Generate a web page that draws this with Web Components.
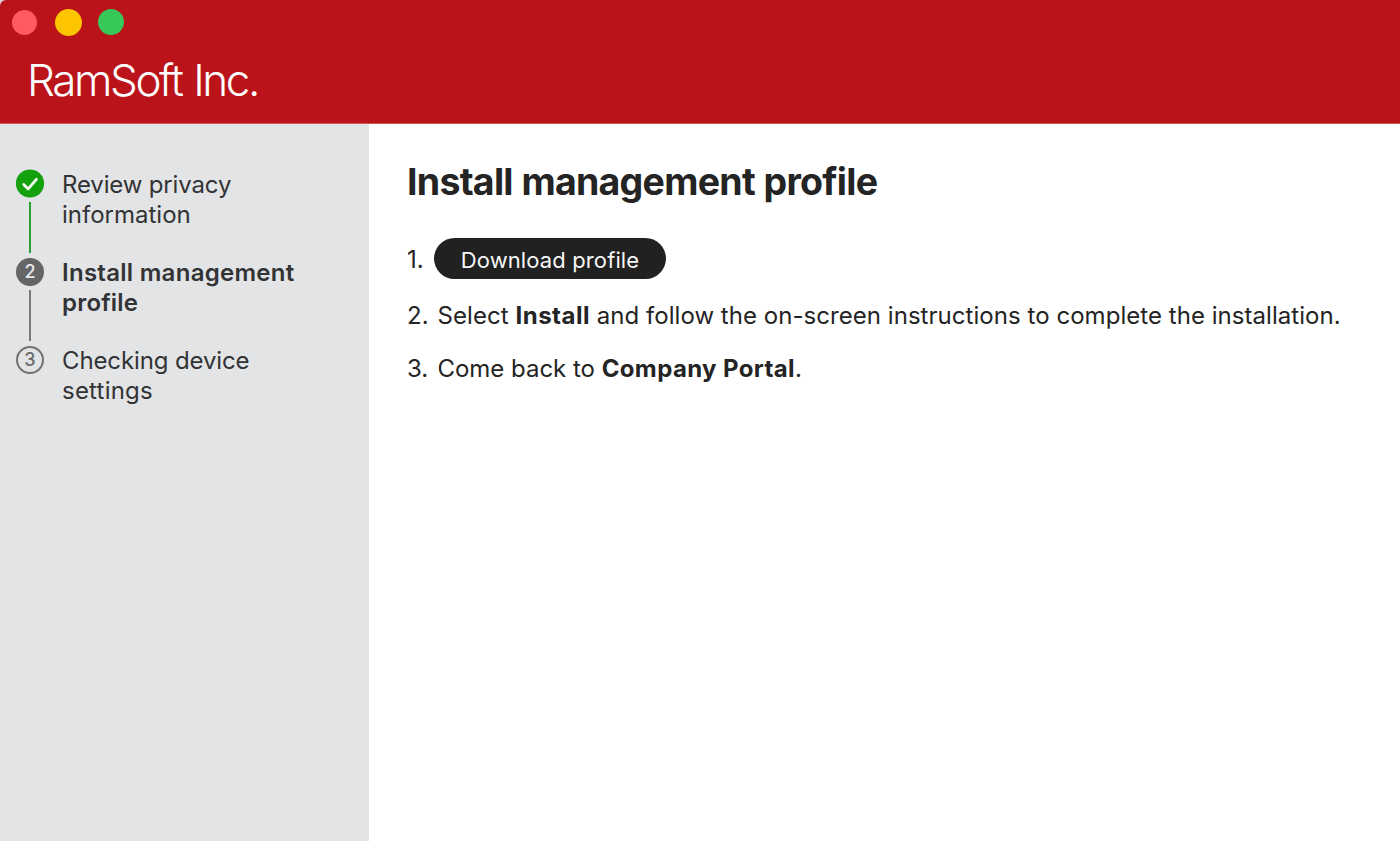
<!DOCTYPE html>
<html lang="en">
<head>
<meta charset="utf-8">
<title>Company Portal</title>
<style>
html, body { margin: 0; height: 100%; overflow: hidden; }
body { font-family: Inter, "Liberation Sans", sans-serif; color: #242424; background: #d9d3d6; }
</style>
</head>
<body>
<portal-window></portal-window>
<script>
const define = (name, html, setup) => customElements.define(name, class extends HTMLElement {
  constructor() {
    super();
    this.attachShadow({ mode: 'open' }).innerHTML = html;
  }
  connectedCallback() { if (setup) setup(this, this.shadowRoot); }
});

define('window-controls', `
<style>
:host { display: flex; align-items: center; height: 28px; padding: 8px 0 0 12px; }
i { width: 26px; height: 26px; border-radius: 50%; flex: none; }
.close { background: #ff5b60; width: 25px; height: 25px; margin-right: 17.5px; }
.min { background: #fdc500; width: 27px; height: 27px; margin-right: 16.5px; }
.max { background: #38c759; }
</style>
<i class="close"></i><i class="min"></i><i class="max"></i>`);

define('title-bar', `
<style>
:host { display: block; box-sizing: border-box; height: 124px; background: #ba141a; border-top-left-radius: 6px; border-bottom: 1px solid #cf5559; }
h1 { margin: 17px 0 0 27px; font-size: 44px; line-height: 54px; font-weight: 300; letter-spacing: -2.4px; word-spacing: 1.6px; color: #fff; white-space: nowrap; }
</style>
<window-controls></window-controls><h1><slot></slot></h1>`);

define('progress-step', `
<style>
:host { display: grid; grid-template-columns: 28px 1fr; column-gap: 18px; height: 88px; color: #323335; }
.rail { display: flex; flex-direction: column; align-items: center; }
.badge { box-sizing: border-box; width: 28px; height: 28px; border-radius: 50%; display: flex; align-items: center; justify-content: center; font-size: 18px; line-height: 28px; font-weight: 500; }
.line { width: 2px; height: 51px; margin-top: 4px; }
:host([state=done]) .line { background: #2e9e33; }
:host([state=current]) .badge { background: #646567; color: #e8e9ea; }
:host([state=current]) .line { background: #77787a; }
:host([state=next]) .badge { border: 2px solid #717274; color: #68696b; }
:host([state=next]) .line { display: none; }
.label { font-size: 24px; line-height: 30px; white-space: nowrap; }
:host([state=current]) .label { font-weight: 600; }
svg { display: block; overflow: visible; }
</style>
<div class="rail"><div class="badge"></div><div class="line"></div></div>
<div class="label"><slot></slot></div>`, (el, root) => {
  root.querySelector('.badge').innerHTML = el.getAttribute('state') === 'done'
    ? '<svg width="28" height="28" viewBox="0 0 28 28"><circle cx="14" cy="13.5" r="14.1" fill="#13a10e"/><path d="M7.7 14.4 12.2 18.9 20.4 9.3" fill="none" stroke="#f4fbf4" stroke-width="2.8" stroke-linecap="round" stroke-linejoin="round"/></svg>'
    : el.getAttribute('number');
});

define('text-run', `
<style>:host { display: inline; }</style><slot></slot>`, el => {
  el.style.letterSpacing = el.getAttribute('spacing') + 'px';
});

define('step-list', `
<style>
:host { display: block; box-sizing: border-box; width: 369px; padding: 46px 0 0 16px; background: #e3e4e6; }
</style>
<progress-step state="done"><text-run spacing="-0.15">Review privacy</text-run><br><text-run spacing="0">information</text-run></progress-step>
<progress-step state="current" number="2"><text-run spacing="0.28">Install management</text-run><br><text-run spacing="0.2">profile</text-run></progress-step>
<progress-step state="next" number="3"><text-run spacing="-0.12">Checking device</text-run><br><text-run spacing="0.22">settings</text-run></progress-step>`);

define('pill-button', `
<style>
:host { display: block; }
button { display: block; box-sizing: border-box; width: 232px; height: 41px; margin: 0; padding: 3px 0 0; border: 0; border-radius: 21px; background: #212121; color: #f6f6f6; font: 400 22px/38px Inter, sans-serif; letter-spacing: .12px; white-space: nowrap; }
</style>
<button><slot></slot></button>`);

define('instruction-item', `
<style>
:host { display: flex; font-size: 24px; line-height: 30px; white-space: nowrap; }
.n { width: 30.5px; flex: none; }
:host([action]) { align-items: center; height: 41px; }
:host([action]) .n { width: 27px; padding-top: 2px; }
</style>
<span class="n"></span><div><slot></slot></div>`, (el, root) => {
  root.querySelector('.n').textContent = el.getAttribute('number') + '.';
});

define('profile-panel', `
<style>
:host { display: block; flex: 1; box-sizing: border-box; padding: 34px 0 0 38px; background: #fff; }
h2 { margin: 0 0 32px; font-size: 37.5px; line-height: 48px; font-weight: 700; letter-spacing: -.73px; word-spacing: .5px; white-space: nowrap; }
.list { display: flex; flex-direction: column; }
instruction-item + instruction-item { margin-top: 22px; }
instruction-item:last-child { padding-top: .6px; }
b { font-weight: 700; }
</style>
<h2>Install management profile</h2>
<div class="list">
<instruction-item number="1" action><pill-button>Download profile</pill-button></instruction-item>
<instruction-item number="2"><text-run spacing="0.08">Select</text-run> <b><text-run spacing="0.5">Install</text-run></b> <text-run spacing="0.045">and follow the on-screen instructions to complete the installation.</text-run></instruction-item>
<instruction-item number="3"><text-run spacing="-0.03">Come back to</text-run> <b><text-run spacing="0.38">Company Portal</text-run></b>.</instruction-item>
</div>`);

define('portal-window', `
<style>
:host { display: flex; flex-direction: column; height: 100vh; }
main { display: flex; flex: 1; }
</style>
<title-bar>RamSoft Inc.</title-bar>
<main><step-list></step-list><profile-panel></profile-panel></main>`);
</script>
</body>
</html>
